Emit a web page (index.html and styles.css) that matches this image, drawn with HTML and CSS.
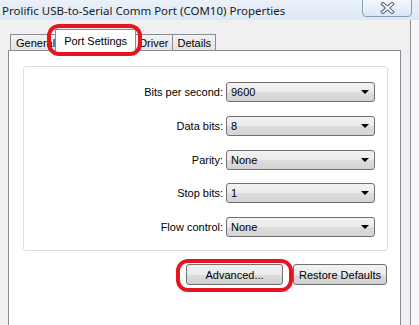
FILE: index.html
```html
<!DOCTYPE html>
<html lang="en">
<head>
  <meta charset="UTF-8" />
  <title>Prolific USB-to-Serial Comm Port (COM10) Properties</title>
  <link rel="stylesheet" href="styles.css">
</head>
<body>
  <div class="window">
    <div class="titlebar">
      <span class="title">Prolific USB-to-Serial Comm Port (COM10) Properties</span>
      <button class="close-btn">
        <svg width="15" height="12" viewBox="0 0 15 12">
          <path d="M3 2 L12 10 M12 2 L3 10" stroke="#56657a" stroke-width="3.8" stroke-linecap="square" fill="none"/>
          <path d="M3 2 L12 10 M12 2 L3 10" stroke="#fff" stroke-width="1.7" stroke-linecap="square" fill="none"/>
        </svg>
      </button>
    </div>

    <div class="client">
      <div class="dialog">
        <div class="tabs">
          <div class="tab tab-general">General</div>
          <div class="tab active">Port Settings</div>
          <div class="tab">Driver</div>
          <div class="tab">Details</div>
        </div>

        <div class="panel">
          <div class="group">
            <div class="row">
              <label>Bits per second:</label>
              <div class="combo"><span>9600</span><i class="arrow"></i></div>
            </div>
            <div class="row">
              <label>Data bits:</label>
              <div class="combo"><span>8</span><i class="arrow"></i></div>
            </div>
            <div class="row">
              <label>Parity:</label>
              <div class="combo"><span>None</span><i class="arrow"></i></div>
            </div>
            <div class="row">
              <label>Stop bits:</label>
              <div class="combo"><span>1</span><i class="arrow"></i></div>
            </div>
            <div class="row">
              <label>Flow control:</label>
              <div class="combo"><span>None</span><i class="arrow"></i></div>
            </div>
          </div>

          <div class="buttons">
            <button class="btn btn-adv">Advanced...</button>
            <button class="btn btn-restore">Restore Defaults</button>
          </div>
        </div>
      </div>
    </div>

    <!-- red annotation rings -->
    <div class="mark mark-tab"></div>
    <div class="mark mark-adv"></div>
  </div>
</body>
</html>
```

FILE: styles.css
```css
body {
  margin: 0;
  width: 419px;
  height: 325px;
  overflow: hidden;
  font-family: 'Liberation Sans', Arial, sans-serif;
  font-size: 11px;
  color: #000;
  background: #f0f0f0;
}

.window {
  position: relative;
  height: 325px;
  display: flex;
  flex-direction: column;
}

.titlebar {
  height: 20px;
  flex-shrink: 0;
  display: flex;
  align-items: flex-start;
  background: linear-gradient(#eaf1f9, #dde8f4);
}

.title {
  flex: 1;
  padding-left: 2px;
  line-height: 22px;
  font-family: 'Noto Sans', sans-serif;
  font-size: 11.5px;
  color: #1a1a1a;
  white-space: nowrap;
}

.close-btn {
  width: 50px;
  height: 18px;
  margin: -1px 7px 0 0;
  padding: 0;
  border: 1px solid #8b9db5;
  border-radius: 0 0 4px 4px;
  background: linear-gradient(#f2f7fc, #d9e7f5);
  display: flex;
  align-items: center;
  justify-content: center;
}

.client {
  flex: 1;
  display: flex;
  background: #f6f8fb;
}

.dialog {
  width: 393px;
  padding: 0 9px 0 8px;
  display: flex;
  flex-direction: column;
  background: #f0f0f0;
  border-right: 1px solid #8a8f96;
}

.tabs {
  height: 30px;
  display: flex;
  align-items: flex-end;
  padding-left: 2px;
}

.tab {
  height: 15px;
  line-height: 16px;
  padding: 0 4px;
  border: 1px solid #898c95;
  border-bottom: none;
  border-right: none;
  background: linear-gradient(#f3f3f3, #e3e3e3);
  white-space: nowrap;
}

.tab-general {
  padding: 0 2px 0 5px;
}

.tab:nth-child(4) {
  border-right: 1px solid #898c95;
}

.tab.active {
  height: 21px;
  line-height: 22px;
  margin: 0 -2px -1px;
  padding: 0 8px;
  border-right: 1px solid #898c95;
  background: #fff;
  position: relative;
  z-index: 1;
}

.panel {
  flex: 1;
  background: #fff;
  border: 1px solid #898c95;
  border-bottom: none;
  padding: 15px 12px 0 14px;
}

.group {
  border: 1px solid #d5dfe5;
  border-radius: 3px;
  padding: 15px 12px 13px;
  display: flex;
  flex-direction: column;
  gap: 13.75px;
}

.row {
  display: flex;
  justify-content: flex-end;
  align-items: center;
  gap: 3px;
}

.combo {
  width: 143px;
  height: 18px;
  padding-left: 4px;
  border: 1px solid #707070;
  border-radius: 3px;
  background: linear-gradient(#f2f2f2 0%, #ebebeb 50%, #dddddd 50%, #d4d4d4 100%);
  display: flex;
  align-items: center;
}

.combo span {
  flex: 1;
}

.arrow {
  width: 0;
  height: 0;
  margin-right: 5px;
  border-left: 4px solid transparent;
  border-right: 4px solid transparent;
  border-top: 4px solid #000;
}

.buttons {
  margin-top: 13px;
  margin-right: 1px;
  display: flex;
  justify-content: flex-end;
  gap: 10px;
}

.btn {
  height: 21px;
  padding: 0;
  border: 1px solid #707070;
  border-radius: 3px;
  background: linear-gradient(#f2f2f2 0%, #ebebeb 50%, #dddddd 50%, #cfcfcf 100%);
  font-family: 'Liberation Sans', Arial, sans-serif;
  font-size: 11px;
  color: #000;
}

.btn-adv {
  width: 97px;
}

.btn-restore {
  width: 94px;
}

.mark {
  position: absolute;
  border: 4px solid #e3161f;
  border-radius: 12px;
  box-sizing: border-box;
  z-index: 5;
}

.mark-tab {
  left: 47px;
  top: 24px;
  width: 95px;
  height: 32px;
}

.mark-adv {
  left: 176px;
  top: 259px;
  width: 117px;
  height: 33px;
}
```
